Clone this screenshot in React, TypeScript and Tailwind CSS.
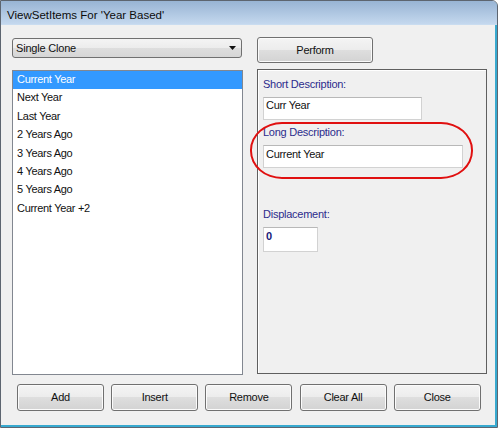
import React from "react";

const font = { fontFamily: '"Liberation Sans", Arial, sans-serif' };

function Btn({ label, className = "" }: { label: string; className?: string }) {
  return (
    <div
      className={
        "flex items-center justify-center border border-[#707070] rounded-[3px] bg-[linear-gradient(to_bottom,#f4f4f4_0%,#ececec_50%,#dedede_50%,#d3d3d3_100%)] text-[11px] leading-[13px] tracking-[-0.25px] text-[#111] shadow-[inset_0_0_0_1px_#fbfbfb] " +
        className
      }
    >
      {label}
    </div>
  );
}

const items = [
  "Current Year",
  "Next Year",
  "Last Year",
  "2 Years Ago",
  "3 Years Ago",
  "4 Years Ago",
  "5 Years Ago",
  "Current Year +2",
];

export default function App() {
  return (
    <div className="w-[499px] h-[429px] bg-white" style={font}>
      <div className="w-[498px] h-[428px] border border-[#5d6570] rounded-tr-[6px] flex flex-col overflow-hidden shadow-[inset_-1px_-1px_0_#36a8cc]">
        {/* title bar */}
        <div className="h-[24px] shrink-0 bg-[linear-gradient(to_bottom,#98b4d4,#c4d8ee)] border-b border-[#c9dcf0] pl-[6px] pt-[7px]">
          <div className="text-[11.5px] leading-[14px] text-[#0c0c0c]">ViewSetItems For 'Year Based'</div>
        </div>
        {/* body */}
        <div className="flex-1 bg-[#f0f0f0] flex flex-col border-r-2 border-b-2 border-r-[#37a9cf] border-b-[#37a9cf] relative">
          <div className="flex pt-[12px] pl-[11px]">
            {/* left column */}
            <div className="w-[231px] mt-[1px] flex flex-col">
              <div className="h-[20px] w-[230px] border border-[#707070] rounded-[3px] bg-[linear-gradient(to_bottom,#f4f4f4_0%,#ececec_50%,#dedede_50%,#d6d6d6_100%)] flex items-center justify-between pl-[3px] pr-[5px]">
                <span className="text-[11px] leading-[18px] tracking-[-0.2px] text-[#111]">Single Clone</span>
                <svg width="7" height="4" viewBox="0 0 7 4">
                  <path d="M0 0 L7 0 L3.5 4 Z" fill="#111" />
                </svg>
              </div>
              <div className="mt-[12px] h-[305px] border border-[#828790] bg-white">
                {items.map((it, i) => (
                  <div
                    key={it}
                    className={
                      "h-[18.4px] pl-[4px] pt-[1px] text-[11px] leading-[14px] tracking-[-0.3px] " +
                      (i === 0 ? "bg-[#3399ff] text-white" : "text-[#111]")
                    }
                  >
                    {it}
                  </div>
                ))}
              </div>
            </div>
            {/* right column */}
            <div className="ml-[14px] w-[230px] flex flex-col">
              <Btn label="Perform" className="w-[116px] h-[26px]" />
              <div className="mt-[6px] h-[305px] border border-[#5f5f5f] shadow-[inset_1px_1px_0_#ffffff] pl-[5px] pt-[8px] flex flex-col">
                <div className="text-[11px] leading-[13px] tracking-[-0.25px] text-[#2c2c8c]">Short Description:</div>
                <div className="mt-[6px] w-[159px] h-[23px] bg-white border border-[#d2d2d2] border-t-[#b8b8b8] pl-[2px] pt-[1px] text-[11px] leading-[13px] tracking-[-0.3px] text-[#111]">
                  Curr Year
                </div>
                <div className="mt-[6px] text-[11px] leading-[13px] tracking-[-0.25px] text-[#2c2c8c]">Long Description:</div>
                <div className="mt-[6px] w-[200px] h-[23px] bg-white border border-[#d2d2d2] border-t-[#b8b8b8] pl-[2px] pt-[2px] text-[11px] leading-[13px] tracking-[-0.3px] text-[#111]">
                  Current Year
                </div>
                <div className="mt-[40px] text-[11px] leading-[13px] tracking-[-0.25px] text-[#2c2c8c]">Displacement:</div>
                <div className="mt-[6px] w-[55px] h-[25px] bg-white border border-[#d2d2d2] border-t-[#b8b8b8] pl-[2px] pt-[2px] text-[11px] leading-[13px] font-bold text-[#1a1a7a]">
                  0
                </div>
              </div>
            </div>
          </div>
          {/* bottom buttons */}
          <div className="flex gap-[7.2px] pl-[16px] mt-[9px]">
            <Btn label="Add" className="w-[87px] h-[27px]" />
            <Btn label="Insert" className="w-[87px] h-[27px]" />
            <Btn label="Remove" className="w-[87px] h-[27px]" />
            <Btn label="Clear All" className="w-[87px] h-[27px]" />
            <Btn label="Close" className="w-[87px] h-[27px]" />
          </div>
          {/* red highlight */}
          <div className="absolute left-[249px] top-[97px] w-[223px] h-[57px] border-2 border-[#e01010] rounded-[32px/28px] pointer-events-none" />
        </div>
      </div>
    </div>
  );
}
